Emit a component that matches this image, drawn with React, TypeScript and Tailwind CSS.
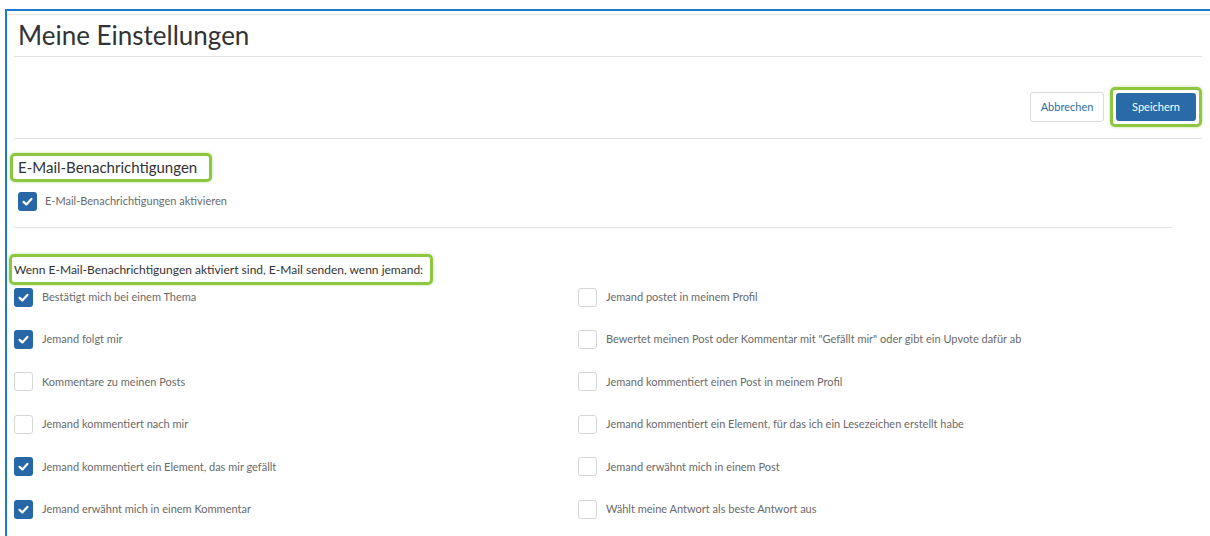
import React from "react";

type Option = { label: string; checked: boolean };

const leftOptions: Option[] = [
  { label: "Bestätigt mich bei einem Thema", checked: true },
  { label: "Jemand folgt mir", checked: true },
  { label: "Kommentare zu meinen Posts", checked: false },
  { label: "Jemand kommentiert nach mir", checked: false },
  { label: "Jemand kommentiert ein Element, das mir gefällt", checked: true },
  { label: "Jemand erwähnt mich in einem Kommentar", checked: true },
];

const rightOptions: Option[] = [
  { label: "Jemand postet in meinem Profil", checked: false },
  {
    label: 'Bewertet meinen Post oder Kommentar mit "Gefällt mir" oder gibt ein Upvote dafür ab',
    checked: false,
  },
  { label: "Jemand kommentiert einen Post in meinem Profil", checked: false },
  {
    label: "Jemand kommentiert ein Element, für das ich ein Lesezeichen erstellt habe",
    checked: false,
  },
  { label: "Jemand erwähnt mich in einem Post", checked: false },
  { label: "Wählt meine Antwort als beste Antwort aus", checked: false },
];

function Checkbox({ checked }: { checked: boolean }) {
  if (!checked) {
    return (
      <span className="block w-[19px] h-[19px] shrink-0 rounded-[3px] border border-[#d6d6d6] bg-white" />
    );
  }
  return (
    <span className="flex items-center justify-center w-[19px] h-[19px] shrink-0 rounded-[3px] bg-[#2767a8]">
      <svg width="13" height="13" viewBox="0 0 20 20">
        <path
          d="M4 10.5 L8.2 14.5 L16 6"
          fill="none"
          stroke="#fff"
          strokeWidth="3.4"
          strokeLinecap="round"
          strokeLinejoin="round"
        />
      </svg>
    </span>
  );
}

function OptionRow({ option }: { option: Option }) {
  return (
    <div className="flex items-center h-[42.4px] gap-[9px]">
      <Checkbox checked={option.checked} />
      <span className="whitespace-nowrap text-[11px] text-[#6a6a6a]">{option.label}</span>
    </div>
  );
}

export default function App() {
  return (
    <div
      className="w-[1210px] h-[536px] overflow-hidden bg-white pt-[9px] pl-[5px]"
      style={{ fontFamily: "Lato, 'Open Sans', sans-serif" }}
    >
      <div className="h-full border-t-2 border-l-2 border-[#1c7bd1] pt-[3px]">
        <div className="border-t border-[#e6e6e6] pl-[7px]">
          <div className="w-[1188px]">
            {/* header */}
            <div className="border-b border-[#e3e3e3] h-[42px]">
              <h1 className="pl-[4px] text-[26px] leading-[41px] text-[#333] whitespace-nowrap">
                Meine Einstellungen
              </h1>
            </div>

            {/* actions */}
            <div className="flex justify-end items-start gap-[6px] pt-[30px] h-[82px] border-b border-[#e3e3e3]">
              <button className="mt-[5px] h-[30px] w-[74px] rounded-[3px] border border-[#dddddd] bg-white text-[11px] text-[#2f6ea6]">
                Abbrechen
              </button>
              <div className="p-[3px] border-[3px] border-[#8dc63f] rounded-[5px] shadow-[0_0_3px_rgba(141,198,63,0.6)]">
                <button className="h-[28px] w-[80px] rounded-[3px] bg-[#2a6aa8] text-[11px] text-white">
                  Speichern
                </button>
              </div>
            </div>

            {/* email section */}
            <div className="w-[1158px] border-b border-[#e3e3e3] pb-[16px]">
              <div className="mt-[14px] -ml-[4px] w-[202px] h-[29px] border-[3px] border-[#8dc63f] rounded-[5px] pl-[5px] shadow-[0_0_3px_rgba(141,198,63,0.6)]">
                <h2 className="whitespace-nowrap text-[15px] leading-[23px] text-[#333]">
                  E-Mail-Benachrichtigungen
                </h2>
              </div>
              <div className="mt-[10px] ml-[4px] flex items-center gap-[8px]">
                <Checkbox checked={true} />
                <span className="whitespace-nowrap text-[11px] text-[#6a6a6a]">
                  E-Mail-Benachrichtigungen aktivieren
                </span>
              </div>
            </div>

            <div className="mt-[26px] -ml-[5px] w-[424px] h-[31px] border-[3px] border-[#8dc63f] rounded-[5px] pl-[2px] shadow-[0_0_3px_rgba(141,198,63,0.6)]">
              <p className="whitespace-nowrap text-[12px] leading-[25px] text-[#333]">
                Wenn E-Mail-Benachrichtigungen aktiviert sind, E-Mail senden, wenn jemand:
              </p>
            </div>

            <div className="grid grid-cols-[564px_1fr] mt-[-9px]">
              <div>
                {leftOptions.map((o) => (
                  <OptionRow key={o.label} option={o} />
                ))}
              </div>
              <div>
                {rightOptions.map((o) => (
                  <OptionRow key={o.label} option={o} />
                ))}
              </div>
            </div>
          </div>
        </div>
      </div>
    </div>
  );
}
